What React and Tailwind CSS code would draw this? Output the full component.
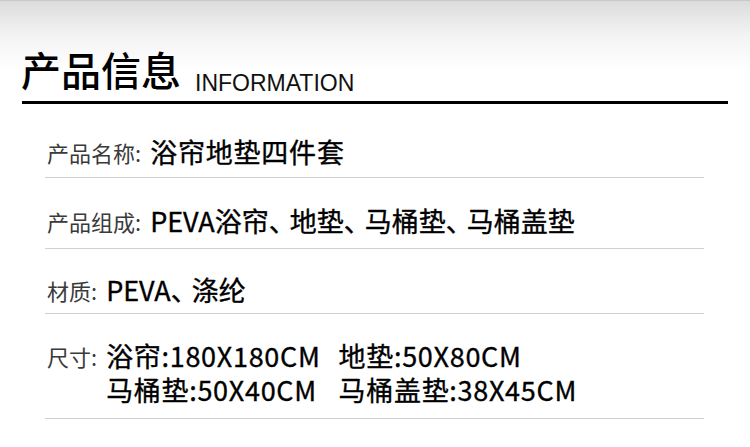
export default function App() {
  const cjk = { fontFamily: '"Noto Sans CJK SC", "Noto Sans", sans-serif' };
  const D = () => <span className="tracking-[-6px]">、</span>;
  return (
    <div className="w-[750px] h-[447px] bg-white overflow-hidden relative" style={cjk}>
      <div className="h-[70px] bg-gradient-to-b from-[#dcdcdc] via-[#f3f3f3] to-white border-t border-[#c8c8c8] absolute top-0 left-0 right-0" />
      <div className="relative pt-[49px]">
        <div className="flex items-end pl-[21px]">
          <span className="text-[40px] leading-[40px] font-medium text-black">产品信息</span>
          <span
            className="ml-[14px] text-[23px] leading-[23px] text-[#111] mb-[-6px]"
            style={{ fontFamily: '"Liberation Sans", Arial, sans-serif' }}
          >
            INFORMATION
          </span>
        </div>
        <div className="mt-[12px] ml-[22px] w-[706px] h-[3px] bg-black" />
        <div className="ml-[45px] w-[659px]">
          <div className="flex items-center border-b border-[#d0d0d0] pt-[31px] pb-[8px]">
            <span className="text-[22px] leading-[34px] text-[#3a3a3a] pl-[2px]">产品名称:</span>
            <span className="ml-[9px] text-[27px] leading-[34px] tracking-[0.8px] text-black [-webkit-text-stroke:0.35px_black]">浴帘地垫四件套</span>
          </div>
          <div className="flex items-center border-b border-[#d0d0d0] pt-[26px] pb-[10px]">
            <span className="text-[22px] leading-[34px] text-[#3a3a3a] pl-[2px]">产品组成:</span>
            <span className="ml-[9px] text-[27px] leading-[34px] text-black [-webkit-text-stroke:0.35px_black]">
              PEVA浴帘<D />地垫<D />马桶垫<D />马桶盖垫
            </span>
          </div>
          <div className="flex items-center border-b border-[#d0d0d0] pt-[24px] pb-[6px]">
            <span className="text-[22px] leading-[34px] text-[#3a3a3a] pl-[2px]">材质:</span>
            <span className="ml-[9px] text-[27px] leading-[34px] text-black [-webkit-text-stroke:0.35px_black]">
              PEVA<D />涤纶
            </span>
          </div>
          <div className="flex items-start border-b border-[#d0d0d0] pt-[25px] pb-[11px]">
            <span className="text-[22px] leading-[34px] text-[#3a3a3a] pl-[2px]">尺寸:</span>
            <div className="ml-[9px] grid grid-cols-[auto_auto] gap-x-[18px] text-[27px] leading-[34px] tracking-[0.7px] text-black [-webkit-text-stroke:0.35px_black]">
              <span>浴帘:180X180CM</span>
              <span>地垫:50X80CM</span>
              <span>马桶垫:50X40CM</span>
              <span>马桶盖垫:38X45CM</span>
            </div>
          </div>
        </div>
      </div>
    </div>
  );
}
